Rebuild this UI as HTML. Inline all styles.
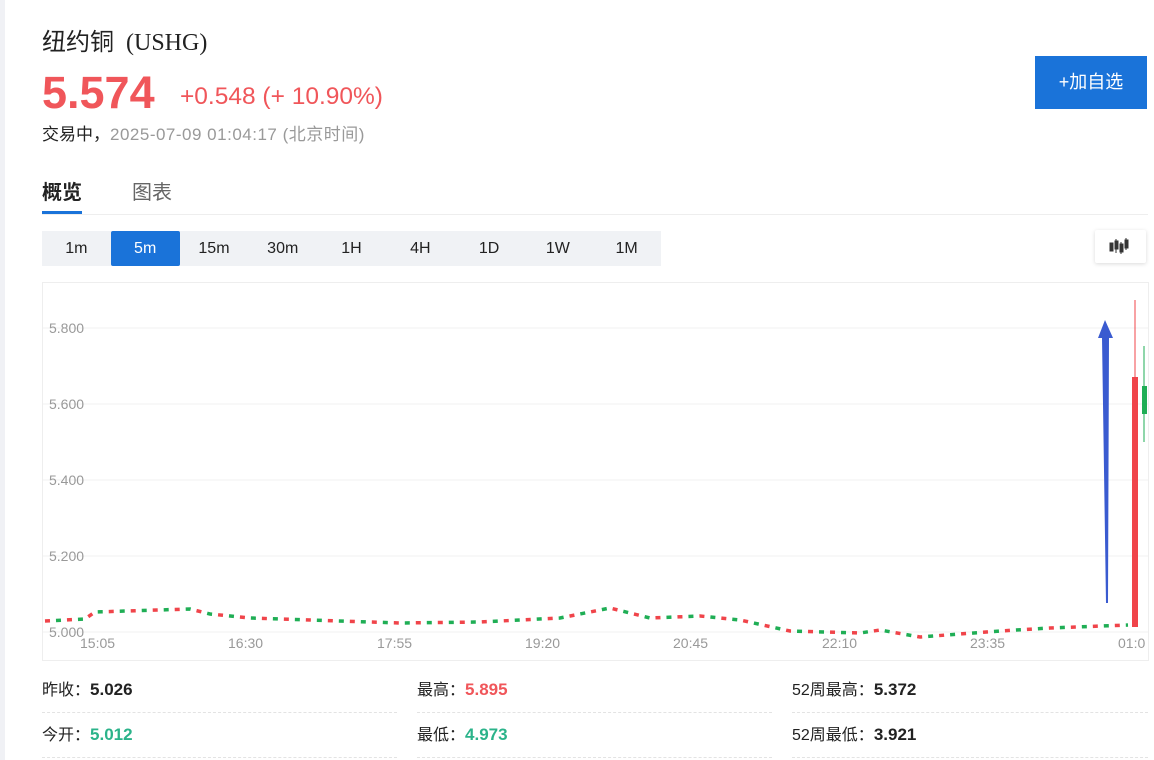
<!DOCTYPE html>
<html><head><meta charset="utf-8"><style>
body{margin:0;width:1154px;height:760px;background:#fff;font-family:"Liberation Sans","Noto Sans CJK SC",sans-serif;position:relative;overflow:hidden}
.strip{position:absolute;left:0;top:0;width:5px;height:760px;background:#f0f1f5}
.a{position:absolute;white-space:nowrap}
.tf{position:absolute;left:42px;top:231px;width:619px;height:35px;background:#f0f2f5;display:flex}
.tf div{width:69px;text-align:center;line-height:35px;font-size:16px;color:#222}
.tf .on{background:#1a73d9;color:#fff;border-radius:2px}
.row{position:absolute;height:44px;border-bottom:1px dashed #e3e3e3;font-size:16px;color:#222;line-height:44px}
.row b{font-weight:bold;font-size:17px}
</style></head><body>
<div class="strip"></div>
<div class="a" style="left:42px;top:22px;font-size:24px;color:#222;font-family:'Liberation Serif','Noto Sans CJK SC',serif">纽约铜 &nbsp;<span style="font-size:24px">(USHG)</span></div>
<div class="a" style="left:42px;top:67px;font-size:45px;font-weight:bold;color:#f0565a">5.574</div>
<div class="a" style="left:180px;top:83px;font-size:24.5px;color:#f0565a">+0.548 (+ 10.90%)</div>
<div class="a" style="left:42px;top:120px;font-size:17px;color:#222">交易中，<span style="color:#999;letter-spacing:0.5px">2025-07-09 01:04:17 (北京时间)</span></div>
<div class="a" style="left:1035px;top:56px;width:112px;height:53px;background:#1a73d9;color:#fff;font-size:18px;line-height:53px;text-align:center">+加自选</div>
<div class="a" style="left:42px;top:176px;font-size:20px;font-weight:bold;color:#222">概览</div>
<div class="a" style="left:132px;top:176px;font-size:20px;color:#666">图表</div>
<div class="a" style="left:42px;top:211px;width:40px;height:3px;background:#1a73d9"></div>
<div class="a" style="left:42px;top:214px;width:1106px;height:1px;background:#eee"></div>
<div class="tf"><div>1m</div><div class="on">5m</div><div>15m</div><div>30m</div><div>1H</div><div>4H</div><div>1D</div><div>1W</div><div>1M</div></div>
<div class="a" style="left:1095px;top:230px;width:51px;height:33px;background:#fff;box-shadow:0 1px 4px rgba(0,0,0,.15);border-radius:2px">
<svg width="51" height="33"><g fill="#333" stroke="#333" stroke-width="1"><rect x="15" y="13" width="3" height="8"/><line x1="21" y1="9" x2="21" y2="23"/><rect x="20" y="11" width="3" height="8"/><line x1="26" y1="12" x2="26" y2="24"/><rect x="25" y="14" width="3" height="8"/><line x1="31" y1="8" x2="31" y2="20"/><rect x="30" y="10" width="3" height="8"/></g></svg></div>
<svg class="a" style="left:0;top:0" width="1154" height="760">
<rect x="42.5" y="282.5" width="1106" height="378" fill="none" stroke="#eee"/>
<g stroke="#f2f2f2"><line x1="43" y1="328" x2="1148" y2="328"/><line x1="43" y1="404" x2="1148" y2="404"/><line x1="43" y1="480" x2="1148" y2="480"/><line x1="43" y1="556" x2="1148" y2="556"/><line x1="43" y1="632" x2="1148" y2="632"/></g>
<g font-size="14" fill="#999" font-family="Liberation Sans"><text x="49" y="333">5.800</text><text x="49" y="409">5.600</text><text x="49" y="485">5.400</text><text x="49" y="561">5.200</text><text x="49" y="637">5.000</text>
<text x="80" y="648">15:05</text><text x="228" y="648">16:30</text><text x="377" y="648">17:55</text><text x="525" y="648">19:20</text><text x="673" y="648">20:45</text><text x="822" y="648">22:10</text><text x="970" y="648">23:35</text><text x="1118" y="648">01:0</text></g>
<polyline fill="none" stroke-width="3.5" points="45,621 85,619 95,612 190,609 210,614 250,618 400,623 480,622 560,618 610,608 650,618 700,616 740,620 790,631 860,633 880,630 920,637 1000,631 1050,628 1128,625" stroke="#f0444a" stroke-dasharray="5 17"/>
<polyline fill="none" stroke-width="3.5" points="45,621 85,619 95,612 190,609 210,614 250,618 400,623 480,622 560,618 610,608 650,618 700,616 740,620 790,631 860,633 880,630 920,637 1000,631 1050,628 1128,625" stroke="#1fae55" stroke-dasharray="5 17" stroke-dashoffset="11"/>
<line x1="1135" y1="300" x2="1135" y2="627" stroke="#f0444a"/><rect x="1132" y="377" width="6" height="250" fill="#f0444a"/>
<line x1="1144" y1="346" x2="1144" y2="442" stroke="#1fae55"/><rect x="1142" y="386" width="5" height="28" fill="#1fae55"/>
<polygon points="1105,320 1113,338 1109,338 1108,603 1106,603 1102,338 1098,338" fill="#3a5bd0"/>
</svg>
<div class="row" style="left:42px;top:668px;width:355px">昨收：<b>5.026</b></div>
<div class="row" style="left:417px;top:668px;width:355px">最高：<b style="color:#f0565a">5.895</b></div>
<div class="row" style="left:792px;top:668px;width:356px">52周最高：<b>5.372</b></div>
<div class="row" style="left:42px;top:713px;width:355px">今开：<b style="color:#2bb38a">5.012</b></div>
<div class="row" style="left:417px;top:713px;width:355px">最低：<b style="color:#2bb38a">4.973</b></div>
<div class="row" style="left:792px;top:713px;width:356px">52周最低：<b>3.921</b></div>
</body></html>
